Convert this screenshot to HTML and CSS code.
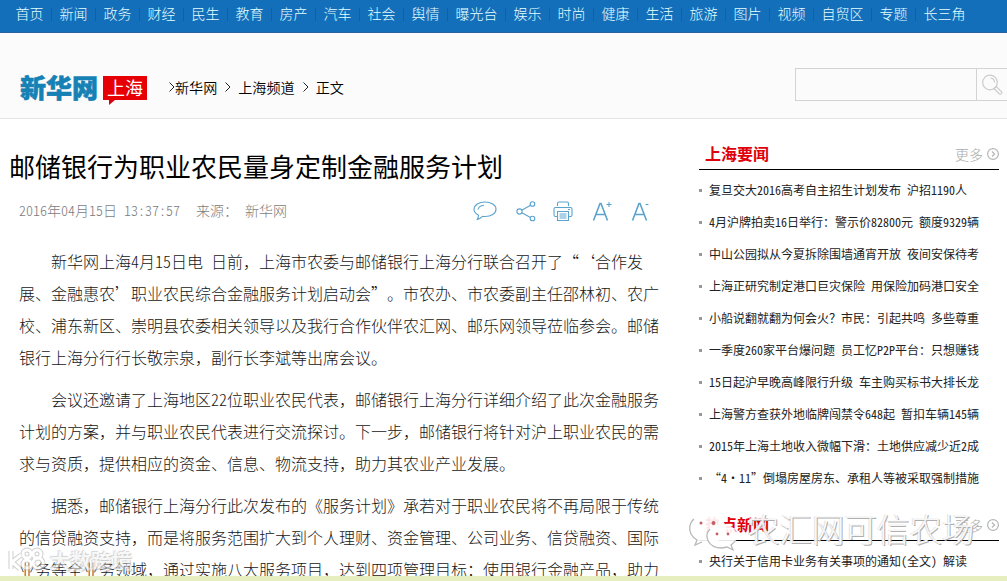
FILE: index.html
```
<!DOCTYPE html>
<html lang="zh-CN">
<head>
<meta charset="utf-8">
<title>邮储银行为职业农民量身定制金融服务计划</title>
<link rel="stylesheet" href="styles.css">
</head>
<body>
<div class="page">
  <nav class="nav">
    <a>首页</a><a>新闻</a><a>政务</a><a>财经</a><a>民生</a><a>教育</a><a>房产</a><a>汽车</a><a>社会</a><a>舆情</a><a>曝光台</a><a>娱乐</a><a>时尚</a><a>健康</a><a>生活</a><a>旅游</a><a>图片</a><a>视频</a><a>自贸区</a><a>专题</a><a>长三角</a>
  </nav>
  <header class="header">
    <div class="logo">新华网</div>
    <div class="city">上海</div>
    <div class="crumbs"><svg class="chev" viewBox="0 0 6 10"><path d="M.5 .5 5 5 .5 9.5"/></svg><span>新华网</span><svg class="chev sp" viewBox="0 0 6 10"><path d="M.5 .5 5 5 .5 9.5"/></svg><span>上海频道</span><svg class="chev sp" viewBox="0 0 6 10"><path d="M.5 .5 5 5 .5 9.5"/></svg><span>正文</span></div>
    <div class="search">
      <div class="field"></div>
      <svg class="glass" width="22" height="22" viewBox="0 0 22 22"><circle cx="8" cy="8.500" r="7.300"/><path d="M8.500 4a4.500 4.500 0 0 1 4 4.500M12 14.500l5.500 5.500q1.300 .6 2-.3t.2-1.800L14.200 12.500z"/></svg>
    </div>
  </header>
  <main class="main">
    <article class="article">
      <h1>邮储银行为职业农民量身定制金融服务计划</h1>
      <div class="meta">
        <span class="date">2016年04月15日 13:37:57</span><span class="src">来源：</span><span>新华网</span>
        <div class="tools">
          <svg width="24" height="22" viewBox="0 0 24 22"><path d="M5.500 15.200C2.500 13.600 1 11.600 1 9.500 1 5 6 2 12 2s11 3 11 7.200-5 7.300-11 7.300c-1 0-1.700 0-2.500-.2-1.500 1.500-3 2.700-5.200 3.200.8-1.300 1.200-2.500 1.200-4.300zM5 9.500C5.500 6.700 8 5.500 11 5.200"/></svg>
          <svg width="20" height="22" viewBox="0 0 20 22"><circle cx="3.500" cy="11.500" r="2.600"/><circle cx="16.500" cy="4" r="2.300"/><circle cx="16.500" cy="18.500" r="2.300"/><path d="M5.800 10.200 14.500 5.200M5.800 12.800l8.700 4.600"/></svg>
          <svg class="print" width="20" height="22" viewBox="0 0 20 22"><path d="M4.500 6V3.500Q4.500 2 6 2h8q1.500 0 1.500 1.500V6M4 16.500H2.500Q1 16.500 1 15V9q0-1.500 1.500-1.500h15Q19 7.500 19 9v6q0 1.500-1.500 1.500H16M4.500 11.500h11v9h-11zM6.500 14h7M6.500 16h7M6.500 18h7M15 9.500h2"/></svg>
          <svg width="20" height="22" viewBox="0 0 20 22"><path class="a" d="M1.500 20.500 8 3.500h1l6.500 17M3.800 14.500h9.400"/><path d="M14.500 4.500h5M17 2v5"/></svg>
          <svg width="18" height="22" viewBox="0 0 18 22"><path class="a" d="M1.500 20.500 8 3.500h1l6.500 17M3.800 14.500h9.400"/><path d="M14.500 4.500h3"/></svg>
        </div>
      </div>
      <div class="body">
        <p>新华网上海<i>4</i>月<i>15</i>日电<i> </i>日前，上海市农委与邮储银行上海分行联合召开了“‘合作发<br>展、金融惠农’职业农民综合金融服务计划启动会”。市农办、市农委副主任邵林初、农广<br>校、浦东新区、崇明县农委相关领导以及我行合作伙伴农汇网、邮乐网领导莅临参会。邮储<br>银行上海分行行长敬宗泉，副行长李斌等出席会议。</p>
        <p>会议还邀请了上海地区<i>22</i>位职业农民代表，邮储银行上海分行详细介绍了此次金融服务<br>计划的方案，并与职业农民代表进行交流探讨。下一步，邮储银行将针对沪上职业农民的需<br>求与资质，提供相应的资金、信息、物流支持，助力其农业产业发展。</p>
        <p>据悉，邮储银行上海分行此次发布的《服务计划》承若对于职业农民将不再局限于传统<br>的信贷融资支持，而是将服务范围扩大到个人理财、资金管理、公司业务、信贷融资、国际<br>业务等全业务领域，通过实施八大服务项目，达到四项管理目标：使用银行金融产品，助力</p>
      </div>
    </article>
    <aside class="side">
      <section>
        <div class="head"><h2>上海要闻</h2><span class="more">更多<svg width="12" height="12" viewBox="0 0 12 12"><circle cx="6" cy="6" r="5.400"/><path d="M5 3.500 7.500 6 5 8.500"/></svg></span></div>
        <ul>
          <li>复旦交大2016高考自主招生计划发布 沪招1190人</li>
          <li>4月沪牌拍卖16日举行：警示价82800元 额度9329辆</li>
          <li>中山公园拟从今夏拆除围墙通宵开放 夜间安保待考</li>
          <li>上海正研究制定港口巨灾保险 用保险加码港口安全</li>
          <li>小船说翻就翻为何会火？市民：引起共鸣 多些尊重</li>
          <li>一季度260家平台爆问题 员工忆P2P平台：只想赚钱</li>
          <li>15日起沪早晚高峰限行升级 车主购买标书大排长龙</li>
          <li>上海警方查获外地临牌闯禁令648起 暂扣车辆145辆</li>
          <li>2015年上海土地收入微幅下滑：土地供应减少近2成</li>
          <li>“4·11”倒塌房屋房东、承租人等被采取强制措施</li>
        </ul>
      </section>
      <section class="second">
        <div class="head"><h2>热点新闻</h2><span class="more">更多<svg width="12" height="12" viewBox="0 0 12 12"><circle cx="6" cy="6" r="5.400"/><path d="M5 3.500 7.500 6 5 8.500"/></svg></span></div>
        <ul><li>央行关于信用卡业务有关事项的通知(全文） 解读</li></ul>
      </section>
    </aside>
  </main>
  <div class="strip"></div>
  <div class="mark farm">
    <svg width="50" height="40" viewBox="0 0 50 40"><path class="bub" d="M19 1C8 1 1 7 1 15c0 5 3 8.500 7 11l-2 5 7-3 6 1C30 29 37 23 37 15S30 1 19 1z"/><path class="bub" d="M33 10c-9 0-15 5-15 12s6 12 15 12l5-1 6 3-2-5c4-2 6-5 6-9 0-7-6-12-15-12z"/><path class="rim" d="M5 5C0 9 0 16 2 20q2 4 6 6l-2 5 7-3M21 15c-6 6-3 19 12 19l5-1 6 3-2-5q3-2 5-5"/><g class="eye"><circle cx="12" cy="9" r="1.500"/><circle cx="24.500" cy="9" r="2"/><circle cx="28" cy="20" r="1.400"/><circle cx="39" cy="20" r="1.400"/></g></svg>
    <span>农汇网可信农场</span>
  </div>
  <div class="mark data">
    <svg width="40" height="26" viewBox="0 0 40 26"><path class="edge" d="M4 4v18M14 8 5 15l8 7"/><g class="edge"><circle cx="20" cy="7" r="4"/><circle cx="30" cy="7" r="4"/><circle cx="20" cy="17" r="4"/><circle cx="31" cy="16" r="5"/></g><path class="core" d="M4 4v18M14 8 5 15l8 7"/><g class="core"><circle cx="20" cy="7" r="4"/><circle cx="30" cy="7" r="4"/><circle cx="20" cy="17" r="4"/><circle cx="31" cy="16" r="5"/></g></svg>
    <span>大数跨境</span>
  </div>
</div>
</body>
</html>
```
FILE: styles.css
```
* { box-sizing: border-box; }
body { margin: 0; background: #fff; font-family: "Noto Sans CJK SC", sans-serif; font-weight: 300; text-spacing-trim: space-all; white-space: nowrap; }
.page { position: relative; display: flex; flex-direction: column; width: 1007px; height: 581px; overflow: hidden; }
svg { flex: none; fill: none; }
.nav { flex: none; display: flex; height: 33px; padding-left: 7.5px; background: #146fbb; border-bottom: 1px solid #2862a0; color: #e4ffff; font-size: 14px; line-height: 27px; }
.nav a { padding: 0 8px; background: linear-gradient(#0c639f, #0c639f) right 8px / 1px 13px no-repeat; }
.nav a:last-child { background: none; }
.header { flex: none; display: flex; height: 86px; padding-left: 20px; background: #fbfbfb; border-bottom: 1px solid #e4e4e4; }
.logo { width: 82px; padding-top: 38px; color: #1681b4; font-size: 26px; font-weight: 900; line-height: 32px; -webkit-text-stroke: .6px #1681b4; }
.city { position: relative; width: 44px; height: 24px; margin: 43px 0 0 1px; background: #e60005; color: #fff; font-size: 18px; font-weight: 400; line-height: 23px; text-align: center; }
.city::after { content: ""; position: absolute; left: 6px; top: 24px; border-top: 5px solid #d80010; border-right: 6px solid transparent; }
.crumbs { display: flex; align-items: center; height: 24px; margin: 42px 0 0 22px; color: #000; font-size: 14.1px; font-weight: 350; }
.chev { width: 6px; height: 10px; stroke: #222; stroke-width: 1; }
.chev.sp { margin: 0 7px 0 8px; }
.search { display: flex; align-items: center; width: 212px; height: 33px; margin: 35px 0 0 auto; border: 1px solid #d3d3d3; border-right: 0; }
.field { width: 181px; height: 31px; border-right: 1px solid #d3d3d3; }
.glass { margin: 0 0 0 5px; stroke: #ccc; stroke-width: 1.2; }
.main { display: flex; flex: 1; min-height: 0; overflow: hidden; }
.article { width: 699px; }
h1 { margin: 28px 0 0 9px; font-size: 26px; font-weight: 400; line-height: 38px; color: #000; }
.meta { display: flex; align-items: center; height: 32px; margin-top: 9px; padding-left: 19px; color: #7c7c7c; font-size: 14px; }
.date { width: 177px; font-feature-settings: "hwid"; }
.src { width: 49px; }
.tools { display: flex; gap: 19px; margin: 2px 0 0 186px; }
.tools .print { margin-left: -2px; }
.tools svg { stroke: #5ba3cf; stroke-width: 1.1; }
.tools .a { stroke-width: 1.6; }
.body { padding: 19px 0 0 19px; color: #161616; font-size: 16px; line-height: 32px; }
.body p { margin: 0 0 10px; text-indent: 32px; }
.body i { font-style: normal; font-feature-settings: "hwid"; }
.side { width: 300px; padding-top: 22px; }
.head { display: flex; justify-content: space-between; height: 29px; padding-left: 6px; border-bottom: 1px solid #000; }
h2 { margin: 0; color: #e0000c; font-size: 16px; font-weight: 700; line-height: 25px; }
.more { display: flex; align-items: center; gap: 4px; height: 26px; color: #aaa; font-size: 14px; }
.more svg { stroke: #b5b5b5; stroke-width: 1.2; }
.side ul { margin: 0; padding: 4px 0 0; list-style: none; }
.side li { display: flex; align-items: center; height: 32px; color: #222; font-size: 12px; font-weight: 400; line-height: 32px; white-space: pre; font-feature-settings: "hwid"; }
.side li::before { content: ""; width: 3px; height: 3px; margin-right: 7px; background: #999; }
.second { padding-top: 18px; }
.strip { flex: none; height: 5px; background: #e6edbf; }
.mark { position: absolute; display: flex; color: rgba(255,255,255,.85); }
.farm { left: 689px; top: 514px; }
.farm span { margin-left: 8px; margin-top: -3px; font-size: 32.500px; line-height: 34px; text-shadow: 1px 1px 0 #b0b0b0, -1px 0 0 #e4e4e4; }
.bub { fill: rgba(255,255,255,.9); }
.rim { stroke: #b8b8b8; stroke-width: 1.3; }
.eye { fill: #c06068; }
.data { left: 7px; top: 547px; opacity: .6; }
.data span { margin-left: 3px; font-size: 20.500px; font-weight: 700; line-height: 27px; text-shadow: 1px 1px 1px #aaa, -1px -1px 1px #bbb; }
.edge { stroke: #b0b0b0; stroke-width: 5; }
.core { stroke: #fff; stroke-width: 3; }
```
